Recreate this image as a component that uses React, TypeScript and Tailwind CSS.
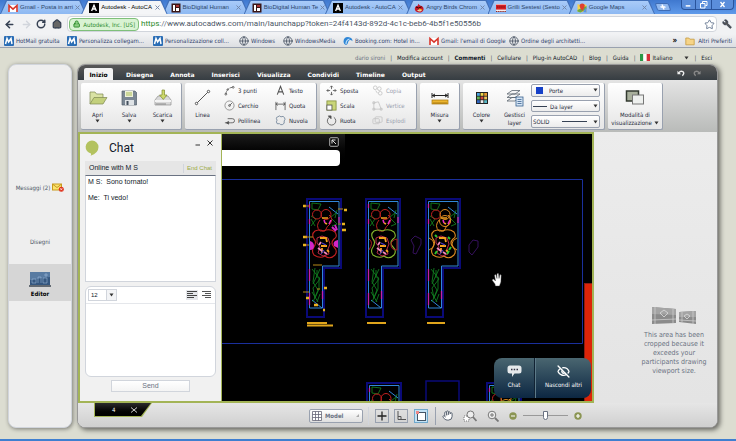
import type { ReactNode } from "react"
import { ArrowLeft, ArrowRight, EyeOff, Globe, Hand, House, Lock, RotateCw, Star, Wrench } from "lucide-react"

type Fav = "gmail" | "autodesk" | "bio" | "birds" | "grilli" | "maps" | "msn" | "globe" | "booking" | "folder"

const tabs: { icon: Fav; label: string; active?: boolean }[] = [
    { icon: "gmail", label: "Gmail - Posta in arri" },
    { icon: "autodesk", label: "Autodesk - AutoCA", active: true },
    { icon: "bio", label: "BioDigital Human" },
    { icon: "bio", label: "BioDigital Human Te" },
    { icon: "autodesk", label: "Autodesk - AutoCA" },
    { icon: "birds", label: "Angry Birds Chrom" },
    { icon: "grilli", label: "Grilli Sestesi (Sesto" },
    { icon: "maps", label: "Google Maps" },
]

const bookmarks: { icon: Fav; label: string; width: string }[] = [
    { icon: "msn", label: "HotMail gratuita", width: "w-[63px]" },
    { icon: "msn", label: "Personalizza collegam...", width: "w-[86px]" },
    { icon: "msn", label: "Personalizzazione coll...", width: "w-[86px]" },
    { icon: "globe", label: "Windows", width: "w-[44px]" },
    { icon: "globe", label: "WindowsMedia", width: "w-[60px]" },
    { icon: "booking", label: "Booking.com: Hotel in...", width: "w-[86px]" },
    { icon: "gmail", label: "Gmail: l'email di Google", width: "w-[80px]" },
    { icon: "globe", label: "Ordine degli architetti...", width: "w-[84px]" },
]

const ribbonTabs = ["Disegna", "Annota", "Inserisci", "Visualizza", "Condividi", "Timeline", "Output"]

function Favicon({ kind }: { kind: Fav }) {
    if (kind === "globe") return <Globe className="size-[10px] shrink-0 text-gray-600" />
    return (
        <svg viewBox="0 0 10 10" className="size-[10px] shrink-0">
            {kind === "gmail" && (
                <>
                    <rect x="0.5" y="2" width="9" height="7" fill="#fff" />
                    <path d="M1 9V2.5L5 6.2 9 2.5V9" fill="none" stroke="#d8352a" strokeWidth="1.6" />
                </>
            )}
            {kind === "autodesk" && (
                <>
                    <rect width="10" height="10" fill="#000" />
                    <path d="M2.6 8L5 2.2 7.4 8M3.5 6h3" fill="none" stroke="#fff" strokeWidth="1.3" />
                </>
            )}
            {kind === "bio" && (
                <>
                    <rect x="0.5" y="0.5" width="9" height="9" fill="#3a1616" />
                    <path d="M2 2h2v6H2zM5 5h3v3H5z" fill="#fff" />
                    <path d="M5 2h3v2H5z" fill="#a33" />
                </>
            )}
            {kind === "birds" && (
                <>
                    <path d="M4 0.8L6 2.4Q9.6 3 9.6 6.2 9 9.6 5 9.6 0.6 9 0.8 5.6 1 3 4 2.4z" fill="#c51a2c" />
                    <path d="M3 7.6q2.5-2 5 0Q6 9.6 3 7.6z" fill="#e8d8b0" />
                    <path d="M5 5.4l3.6 1-3.4 1.2z" fill="#f5b51c" />
                    <path d="M2 4l2.5 1L7.6 3.8" stroke="#300" fill="none" />
                </>
            )}
            {kind === "grilli" && (
                <>
                    <rect y="1" width="10" height="8" fill="#fff" />
                    <rect y="1.6" width="10" height="5" fill="#d51e25" />
                    <path d="M1 4h8M0 8.4h10" stroke="#7c1010" strokeDasharray="1.5 0.6" />
                </>
            )}
            {kind === "maps" && (
                <>
                    <path d="M0.5 1l3 1 3-1 3 1v7.5l-3-1-3 1-3-1z" fill="#f7d24a" />
                    <path d="M0.5 7l9-4v3l-6 3.5-3-1z" fill="#6aaa45" />
                    <path d="M6 9L9.5 4v5.5z" fill="#5b93e6" />
                    <path d="M5.2 8Q2.6 4.6 2.6 3a2.6 2.6 0 015.2 0Q7.8 4.6 5.2 8z" fill="#e0402f" />
                </>
            )}
            {kind === "msn" && (
                <>
                    <rect width="10" height="10" rx="1" fill="#2a6db5" />
                    <path d="M1.5 8L3 2.5 4.6 6 7 2.5 8 8" fill="none" stroke="#fff" strokeWidth="1.5" />
                </>
            )}
            {kind === "booking" && (
                <>
                    <path d="M0.5 6Q0.5 1 5 1q4.5 0.4 4.5 4.2Q7 3 5.6 5 5 8 3 9 0.8 8.4 0.5 6z" fill="#2f86d6" />
                    <path d="M3 8Q3 4 6.5 3" stroke="#bfe0fa" strokeWidth="1.2" fill="none" />
                </>
            )}
            {kind === "folder" && (
                <path d="M0.8 2h3l1 1.2h4.4v5.6H0.8z" fill="#f6d488" stroke="#c79a3e" strokeWidth="0.8" />
            )}
        </svg>
    )
}

function Caret() {
    return (
        <svg viewBox="0 0 5 4" className="h-[4px] w-[5px] shrink-0 pointer-events-none">
            <path d="M0.5 0.5h4L2.5 3.5z" fill="#333" />
        </svg>
    )
}

function BrowserTabs() {
    return (
        <div className="flex h-[14px] items-stretch bg-linear-to-b from-[#3f78cf] to-[#5f9aea]">
            <div className="flex min-w-0 flex-1" role="tablist">
                {tabs.map((tab, i) => (
                    <button
                        key={i}
                        role="tab"
                        aria-selected={!!tab.active}
                        className={
                            "-mr-[5px] min-w-0 flex-1 bg-[#4270b8] px-px pt-px [clip-path:polygon(0_100%,6px_0,calc(100%-6px)_0,100%_100%)] " +
                            (tab.active ? "relative z-10" : "")
                        }
                    >
                        <span
                            className={
                                "flex h-full items-center gap-[2px] px-[7px] [clip-path:polygon(0_100%,6px_0,calc(100%-6px)_0,100%_100%)] " +
                                (tab.active ? "bg-[#f4f5f7] text-black" : "bg-linear-to-b from-[#a9cbf8] to-[#8db8f2] text-[#2c4468]")
                            }
                        >
                            <Favicon kind={tab.icon} />
                            <span className="flex-1 text-left font-['Liberation_Sans',Arial,sans-serif] text-[6px] whitespace-nowrap">{tab.label}</span>
                            <svg viewBox="0 0 5 5" className="size-[5px] shrink-0"><path d="M.5.5l4 4M4.500.5l-4 4" stroke="#6f82a4" strokeWidth="0.900" /></svg>
                        </span>
                    </button>
                ))}
            </div>
            <button aria-label="Nuova scheda" className="ml-[6px] h-[8px] w-[14px] skew-x-[20deg] self-center rounded-xs border border-[#3e6cb5] bg-[#8fb7ee]">
                <svg viewBox="0 0 12 6" className="h-full w-full"><path d="M6 .5v5M3.500 3h5" stroke="#fff" strokeWidth="1.500" /></svg>
            </button>
            <div className="ml-[11px] flex h-[10px] pr-[2px] text-white">
                <button aria-label="Riduci" className="w-[15px] rounded-bl border border-t-0 border-[#2a549c] bg-[#5b8edb]">
                    <svg viewBox="0 0 14 9" className="h-full w-full"><path d="M4 6h5" stroke="#fff" strokeWidth="1.6" /></svg>
                </button>
                <button aria-label="Ripristina" className="w-[15px] border-b border-[#2a549c] bg-[#5b8edb]">
                    <svg viewBox="0 0 14 9" className="h-full w-full"><path d="M6 3V1.500h4.500v4H9M4 3.500h4.500V8H4z" stroke="#fff" fill="none" /></svg>
                </button>
                <button aria-label="Chiudi" className="w-[23px] rounded-br border border-t-0 border-[#2a549c] bg-[#5b8edb]">
                    <svg viewBox="0 0 14 9" className="h-full w-full"><path d="M5 2l4 5M9 2L5 7" stroke="#fff" strokeWidth="1.3" /></svg>
                </button>
            </div>
        </div>
    )
}

function AddressBar() {
    return (
        <div className="flex h-[20px] items-center bg-[#f1f2f4] px-[4px] text-gray-700">
            <button aria-label="Indietro" className="w-[17px]"><ArrowLeft className="size-[11px]" strokeWidth={3.500} /></button>
            <button aria-label="Avanti" className="w-[15px] text-gray-300"><ArrowRight className="size-[11px]" strokeWidth={3} /></button>
            <button aria-label="Ricarica" className="w-[16px]"><RotateCw className="size-[10px]" strokeWidth={3.500} /></button>
            <button aria-label="Pagina iniziale" className="w-[15px]"><House className="size-[10px]" strokeWidth={3} fill="#666" /></button>
            <div className="flex h-[16px] min-w-0 flex-1 items-center rounded-sm border border-gray-300 bg-white px-px">
                <span className="flex h-[13px] w-[70px] items-center gap-[3px] rounded-sm border border-[#7fc07a] bg-[#d9f3d3] px-[3px] text-[6px] whitespace-nowrap text-[#2b8a2b]">
                    <Lock className="size-[8px]" fill="#8fce85" strokeWidth={3} />
                    Autodesk, Inc. [US]
                </span>
                <label className="ml-[2px] flex h-full min-w-0 flex-1 items-center font-[Roboto,'Open_Sans',sans-serif] text-[8px]">
                    <span className="text-[#2b8a2b]">https</span>
                    <span className="text-gray-500">://</span>
                    <input
                        aria-label="Indirizzo"
                        className="min-w-0 flex-1 bg-transparent text-gray-600 outline-none"
                        defaultValue="www.autocadws.com/main/launchapp?token=24f4143d-892d-4c1c-beb6-4b5f1e50556b"
                    />
                </label>
                <Star className="size-[11px] text-slate-500" />
            </div>
            <button aria-label="Strumenti" className="ml-[5px]"><Wrench className="size-[10px] -scale-x-100" fill="#555" /></button>
        </div>
    )
}

function Bookmarks() {
    return (
        <nav className="flex h-[14px] items-center border-b border-gray-400 bg-linear-to-b from-[#f1f2f4] to-[#dddfe2] px-[4px] text-[6px] text-[#30426b]">
            {bookmarks.map((item) => (
                <a key={item.label} href="#" className={"flex shrink-0 items-center gap-[2px] whitespace-nowrap " + item.width}>
                    <Favicon kind={item.icon} />
                    {item.label}
                </a>
            ))}
            <span className="ml-auto text-[8px] font-bold text-black">»</span>
            <a href="#" className="ml-[8px] flex shrink-0 items-center gap-[3px] whitespace-nowrap">
                <Favicon kind="folder" />
                Altri Preferiti
            </a>
        </nav>
    )
}

function AccountLinks() {
    const sep = <span className="text-gray-600">|</span>
    return (
        <nav className="flex h-[16px] items-center justify-end gap-[5px] pt-[3px] pr-[24px] text-[6px] whitespace-nowrap text-gray-900">
            <span className="text-gray-500">dario sironi</span>
            {sep}
            <a href="#">Modifica account</a>
            {sep}
            <a href="#" className="font-bold">Commenti</a>
            {sep}
            <a href="#">Cellulare</a>
            {sep}
            <a href="#">Plug-in AutoCAD</a>
            {sep}
            <a href="#">Blog</a>
            {sep}
            <a href="#">Guida</a>
            {sep}
            <label className="flex items-center gap-[2px]">
                <svg viewBox="0 0 10 7" className="h-[7px] w-[10px]">
                    <path d="M0 0h3.300v7H0z" fill="#2a9a48" />
                    <path d="M3.300 0h3.400v7H3.300z" fill="#fff" />
                    <path d="M6.700 0H10v7H6.700z" fill="#d8303a" />
                </svg>
                <select aria-label="Lingua" className="w-[30px] appearance-none bg-transparent outline-none"><option>Italiano</option></select>
                <Caret />
            </label>
            {sep}
            <a href="#">Esci</a>
        </nav>
    )
}

function Sidebar() {
    return (
        <aside className="mb-[11px] flex w-[64px] flex-col rounded-lg border border-gray-300 bg-[#eeeeee] pt-[118px] text-[6px] text-gray-600 shadow-[1px_1px_4px_rgba(0,0,0,0.45)]">
            <button className="flex items-center justify-center gap-[2px] whitespace-nowrap">
                Messaggi (2)
                <svg viewBox="0 0 12 9" className="h-[9px] w-[12px]">
                    <rect x="0.5" y="1" width="9" height="6" fill="#fbe36c" stroke="#c89a1c" />
                    <path d="M1 1.500l4 3 4-3" fill="none" stroke="#b5860f" strokeWidth="0.8" />
                    <circle cx="9.300" cy="6.200" r="2.500" fill="#e0341e" />
                    <path d="M8.300 5.200l2 2m0-2l-2 2" stroke="#fff" strokeWidth="0.700" />
                </svg>
            </button>
            <button className="mt-[45px]">Disegni</button>
            <button className="mt-[18px] flex h-[37px] flex-col items-center justify-center gap-[2px] bg-[#d6d6d6] pt-[4px] font-bold text-black">
                <svg viewBox="0 0 22 15" className="h-[15px] w-[22px]">
                    <rect x="1" width="20" height="13" fill="#35577f" />
                    <path d="M1 0h20v5L1 8z" fill="#587ba2" />
                    <path d="M3 11V7h4v4zm6 0V5h3v6m2 0V6h4v5zM17 1v4m-2-2h4" fill="none" stroke="#a9c6e6" strokeWidth="0.5" />
                    <path d="M0 14h22" stroke="#3d4650" strokeWidth="1.5" />
                </svg>
                Editor
            </button>
        </aside>
    )
}

function Group({ children, className = "" }: { children: ReactNode; className?: string }) {
    return (
        <div className={"flex h-[47px] shrink-0 rounded-xs border-r border-b border-gray-400 bg-linear-to-b from-white to-[#e6e6e6] " + className}>
            {children}
        </div>
    )
}

function BigButton({ icon, label, menu, className = "" }: { icon: ReactNode; label: string; menu?: boolean; className?: string }) {
    return (
        <button className={"flex shrink-0 flex-col items-center pt-[6px] text-center leading-[8px] " + className}>
            <svg viewBox="0 0 20 18" className="mb-[4px] h-[18px] w-[20px]">{icon}</svg>
            <span className="whitespace-pre">{label}</span>
            {menu && <Caret />}
        </button>
    )
}

function SmallButton({ icon, label, off }: { icon: ReactNode; label: string; off?: boolean }) {
    return (
        <button disabled={off} className={"flex h-[15px] items-center gap-[3px] whitespace-nowrap " + (off ? "text-gray-400" : "")}>
            <svg viewBox="0 0 12 12" className="size-[11px] shrink-0" fill="none" stroke={off ? "#c4c4c4" : "#555"} strokeWidth="0.9">{icon}</svg>
            {label}
        </button>
    )
}

function PropSelect({ label, option, before, after }: { label: string; option: string; before?: ReactNode; after?: ReactNode }) {
    return (
        <label className="flex h-[13px] items-center gap-[3px] rounded-xs border border-gray-400 bg-linear-to-b from-white to-[#ececec] px-px">
            {before}
            <select aria-label={label} className="min-w-0 flex-1 appearance-none bg-transparent outline-none"><option>{option}</option></select>
            {after}
            <Caret />
        </label>
    )
}

function Ribbon() {
    return (
        <div className="flex h-[52px] gap-[3px] overflow-hidden bg-linear-to-b from-[#e4e4e4] to-[#b9bbb9] px-[3px] pt-[3px] text-[6px] text-gray-800">
            <Group className="w-[101px]">
                <BigButton menu label="Apri" className="w-[33px]" icon={
                    <g stroke="#7d8750" strokeWidth="0.7">
                        <path d="M2 15V3h5l1.500 2H15v4" fill="#d9e2a4" />
                        <path d="M2 15L6 8.500h13L15 15z" fill="#c3d07c" />
                    </g>
                } />
                <BigButton menu label="Salva" className="w-[30px]" icon={
                    <g>
                        <path d="M3 2h13l1.500 1.500V16H3z" fill="#7b8794" stroke="#55606c" strokeWidth="0.7" />
                        <rect x="6" y="2" width="8" height="6" fill="#eef2da" />
                        <rect x="6" y="11" width="9" height="5" fill="#dfe3e6" />
                        <rect x="7.500" y="12" width="2" height="4" fill="#45515e" />
                        <path d="M7 4h6M7 6h6" stroke="#a9bb58" />
                    </g>
                } />
                <BigButton menu label="Scarica" className="w-[37px]" icon={
                    <g>
                        <path d="M2 11l3-4h10l3 4v5H2z" fill="#d9d9d9" stroke="#8f8f8f" strokeWidth="0.7" />
                        <path d="M2 11h16v2H2z" fill="#f4f4f4" />
                        <path d="M3 15h10" stroke="#8a8a8a" />
                        <path d="M9 1h2.500v5h2.500l-3.700 4.500L6.500 6H9z" fill="#cdd96b" stroke="#7e8a2c" strokeWidth="0.7" />
                    </g>
                } />
            </Group>
            <Group className="w-[132px]">
                <BigButton label="Linea" className="w-[35px]" icon={
                    <g stroke="#555" fill="#fff">
                        <path d="M4 14L15 3" />
                        <circle cx="3.500" cy="14.500" r="1.200" />
                        <circle cx="15.500" cy="2.500" r="1.200" />
                    </g>
                } />
                <div className="flex w-[52px] flex-col pl-[4px]">
                    <SmallButton label="3 punti" icon={<g><path d="M2 10Q3 3 9.500 2.500" strokeDasharray="3 1" /><circle cx="2" cy="10" r="1" /><circle cx="10" cy="2.500" r="1" /><circle cx="4" cy="5" r="0.800" /></g>} />
                    <SmallButton label="Cerchio" icon={<g><circle cx="6" cy="6" r="5" stroke="#888" /><circle cx="6" cy="6" r="1" /><path d="M6 6l3-3" /></g>} />
                    <SmallButton label="Polilinea" icon={<g><path d="M1 8.500h6M4 4h5q2.500 0 2.500 2.200T9 8.500H7" /><path d="M5 7v3L2.500 8.500z" fill="#444" /></g>} />
                </div>
                <div className="flex flex-col pl-[3px]">
                    <SmallButton label="Testo" icon={<path d="M2.500 10.500L6 1.500l3.500 9M3.800 7.500h4.400" strokeWidth="1.200" />} />
                    <SmallButton label="Quota" icon={<path d="M1 2v9M11 2v9M1 4.500h10M3 3L1 4.500 3 6M9 3l2 1.500L9 6" />} />
                    <SmallButton label="Nuvola" icon={<path d="M3 2q2-2 3.500 0 2.500-1.500 4 1 1 2-0.500 3.500 1 3-2 4-2 0.500-3-1Q1.500 10.500 1.500 7.500 3 5.500 1.500 4 1.500 2 3 2z" stroke="#6c7f95" />} />
                </div>
            </Group>
            <Group className="w-[97px] px-[6px]">
                <div className="flex w-[46px] flex-col">
                    <SmallButton label="Sposta" icon={<path d="M6 1v3.500M6 7.500V11M1 6h3.500M7.500 6H11M4.500 2.500L6 1l1.500 1.500M4.500 9.500L6 11l1.500-1.500M2.500 4.500L1 6l1.500 1.500M9.500 4.500L11 6 9.500 7.500" />} />
                    <SmallButton label="Scala" icon={<g><rect x="1" y="1" width="10" height="10" fill="#c9d679" stroke="#87933f" /><rect x="1" y="5.500" width="5.500" height="5.500" fill="#fff" stroke="#555" /></g>} />
                    <SmallButton label="Ruota" icon={<g><path d="M4 2.300A4.600 4.600 0 108.500 2.500" /><path d="M2.500 1h3v3z" fill="#444" /></g>} />
                </div>
                <div className="flex flex-col">
                    <SmallButton off label="Copia" icon={<g><circle cx="3.500" cy="3" r="2" /><circle cx="8" cy="4" r="2" /><circle cx="9" cy="9" r="2" /><path d="M4 6l2 3" /></g>} />
                    <SmallButton off label="Vertice" icon={<g><path d="M2 10V3l5-1 3 8z" /><path d="M1 2h2v2H1zM1 9h2v2H1zM9 9h2v2H9z" fill="#ddd" /></g>} />
                    <SmallButton off label="Esplodi" icon={<g><rect x="3.500" y="2" width="7.500" height="6" rx="1" /><rect x="1" y="4" width="7" height="5.500" rx="1" /></g>} />
                </div>
            </Group>
            <Group className="w-[40px]">
                <BigButton menu label="Misura" className="w-full" icon={
                    <g>
                        <path d="M2 4v5M18 4v5M2 6.500h16M5 5L2.500 6.500 5 8M15 5l2.500 1.500L15 8" fill="none" stroke="#222" />
                        <rect x="2" y="11" width="16" height="4" fill="#edb62f" stroke="#a6760c" strokeWidth="0.7" />
                        <path d="M4 13v2m2-2v2m2-2v2m2-2v2m2-2v2m2-2v2m2-2v2" stroke="#7c5500" strokeWidth="0.6" />
                    </g>
                } />
            </Group>
            <Group className="w-[142px]">
                <BigButton menu label="Colore" className="w-[37px]" icon={
                    <g>
                        <rect x="4" y="3" width="12" height="12" fill="#222" />
                        {["#4aa3e0", "#f0d84a", "#e89a30", "#62b354", "#d34a3a", "#eec95c", "#2f65c0", "#eee", "#58b9c6"].map((c, i) => (
                            <rect key={c} x={5 + (i % 3) * 3.600} y={4 + Math.floor(i / 3) * 3.600} width="2.800" height="2.800" fill={c} />
                        ))}
                    </g>
                } />
                <BigButton label={"Gestisci\nlayer"} className="w-[29px]" icon={
                    <g fill="#f5f5f5" stroke="#5c6670" strokeWidth="0.8">
                        <path d="M2 12l5-3.500h8L10 12zM2 8.500L7 5h8l-5 3.500zM2 5l5-3.500h8L10 5z" />
                        <rect x="11" y="8" width="7" height="9" fill="#d5e4f4" stroke="#38618f" />
                        <path d="M12.500 10.500h4m-4 2h4m-4 2h4" stroke="#38618f" />
                    </g>
                } />
                <div className="flex min-w-0 flex-1 flex-col gap-[3px] py-px pr-[4px] pl-[2px]">
                    <PropSelect label="Colore layer" option="Porte" before={<span className="mr-[3px] ml-[3px] size-[7px] bg-[#1540c8]" />} />
                    <PropSelect label="Spessore" option="Da layer" before={<span className="h-px w-[14px] bg-gray-700" />} />
                    <PropSelect label="Tipo di linea" option="SOLID" after={<span className="mr-[3px] h-px w-[25px] bg-gray-700" />} />
                </div>
            </Group>
            <Group className="w-[55px]">
                <button className="flex w-full flex-col items-center pt-[6px] text-center leading-[8px]">
                    <svg viewBox="0 0 20 18" className="mb-[4px] h-[18px] w-[20px]">
                        <rect x="1.500" y="2" width="12" height="10" fill="#a9b09c" stroke="#333a30" strokeWidth="1.500" />
                        <rect x="7.500" y="6" width="11" height="9" fill="#eef0ee" stroke="#777" />
                    </svg>
                    <span>Modalità di</span>
                    <span className="flex items-center gap-[2px]">visualizzazione <Caret /></span>
                </button>
            </Group>
        </div>
    )
}

// One floor plan: a wide room on top and a corridor leg below, with furniture.
function Plan({ x, y = 0, variant }: { x: number; y?: number; variant: 1 | 2 | 3 }) {
    const body = variant === 1 ? "#c22020" : variant === 2 ? "#86b82c" : "#dc8a20"
    return (
        <g transform={`translate(${x} ${y})`} fill="none">
            <path d="M0 0H34V69H17V118H0z" stroke="#0a0a78" strokeWidth="2" />
            <path d="M2.500 2.500H32V67H15.500V109H2.500z" stroke="#3186d8" />
            <path d="M2.500 5v4m0 11v5m0 45v12m0 12v12M15.500 92v8M32 18v6" stroke="#c423a8" strokeWidth="1.300" />
            <path d="M5 4l9 1-3 6-6-1zM4 17l5 3-5 7M8 27l-4-7M24 18l5-4M25 20l5 5-5 2M30 11l-2 8" stroke="#127a1c" strokeWidth="0.900" />
            <path d="M22 8l9 7M5 101l10 8" stroke="#3186d8" />
            <path d="M5 70l8 10-7 9 2 10M8 69l-2 14 5 8-5 12M13 70l-7 15M12 78v12l-4 9M10 71v8M5 93l6 10M13 95l-3 8" stroke="#117a20" strokeWidth="0.900" />
            <circle cx="10" cy="15.500" r="4.500" stroke="#c22020" />
            <circle cx="19" cy="15.500" r="5" stroke={variant === 3 ? body : "#c22020"} />
            <path d="M13 21q-5 6 0 11h5q2-5 5-7 4-5-1-9" stroke={variant === 3 ? body : "#b92020"} />
            <path d="M15 19h6m-3 5l2 1" stroke="#f1a11e" strokeWidth="1.600" />
            <path d="M17 21l1 3m6-3-2 4" stroke="#e22cc0" strokeWidth="1.600" />
            <path d="M8 32q5-2 8 0 7-3 12 1 3 5-1 7-4 4 0 8 4 4 1 8-5 5-10 1-5 3-11-1-3-4 0-8 3-5 0-8-3-5 1-8z" stroke={body} strokeWidth="1.100" />
            <path d="M10 39l5-2 6 2 2 6-2 5 1 5-6 2-5-3 2-6-3-4z" stroke="#b52a46" />
            <path d="M13 39h6l1 4m-6 4h6m-5 2v5m5-3 2 2" stroke="#f3a01c" strokeWidth="1.800" />
            <path d="M11 49l4 3m2 1 3 2m-6-12-2 3" stroke="#ee8ac0" strokeWidth="1.800" />
            <path d="M15 44l4 2m-2 5-3 4" stroke="#4938c2" strokeWidth="1.200" />
            {variant === 1 && (
                <>
                    <path d="M3 42q4 1 4 5t-4 4zM31 41q-6 1-4 6l4 2z" fill="#d426c8" />
                    <path d="M25 28l4 4m-1-6 2 5" stroke="#d426c8" strokeWidth="2" />
                    <path d="M-4 7h3m-3 31h4m-4 8h3m38-35h3m-5 14h3m-3 6h4M17 89h3m-21 10h3m14 12h2M7 106h4" stroke="#eab220" strokeWidth="2.600" />
                    <path d="M-2 7h4m-4 31h8m-7 8h3m29-36h5m-5 15h3m-21 65h-3M-4 93h6M6 66h9" stroke="#b88a18" />
                </>
            )}
            {variant === 2 && (
                <path d="M31 40q-6 1-6 6t6 5zM3 40q5 3 0 11" stroke="#a81c22" />
            )}
            {variant === 3 && (
                <>
                    <circle cx="19" cy="22" r="5.500" stroke={body} />
                    <path d="M3 39q5 2 5 6t-5 6M31 39q-5 2-5 6t5 6" stroke={body} />
                    <path d="M9 36l2 2m11 0 2 2m-1 12-2 3m-12 0 2-3m14-4-2 3" stroke="#2fc42c" strokeWidth="2" />
                </>
            )}
        </g>
    )
}

function Drawing() {
    return (
        <svg viewBox="80 134 512 267" className="absolute top-0 right-0 h-[267px] w-[512px]" role="img" aria-label="Disegno">
            <path d="M80 179.500H582.500V343.500H80" fill="none" stroke="#1a2f9c" />
            <Plan x={307} y={199} variant={1} />
            <Plan x={366} y={199} variant={2} />
            <Plan x={426} y={199} variant={3} />
            <path d="M307 323h20M307 325.500h26M367 323h19M427 323h18" stroke="#e0a51c" strokeWidth="2" />
            <path d="M411 240l4-4 6 3v5l-5 10-3-1 1-7zM469 245l4-5 5 1v6l-6 8-3-3z" fill="none" stroke="#35105c" />
            <Plan x={367} y={383} variant={2} />
            <rect x="426" y="381" width="33" height="40" fill="none" stroke="#0a0a78" strokeWidth="1.500" />
            <Plan x={487} y={383} variant={3} />
            <rect x="584.500" y="283.500" width="8" height="120" fill="#dd2408" stroke="#8c1c12" />
            <path d="M495 284l-3-4 1.500-1 2 2-1-6 1.500-.5 1 4 0-5h1.500l.5 5 1-4 1.200.5-.3 7-1.500 4h-4z" fill="#fff" stroke="#444" strokeWidth="0.400" />
        </svg>
    )
}

function ChatWindow() {
    return (
        <section className="absolute inset-y-0 left-0 flex w-[142px] flex-col border-r border-[#a3b456] bg-[#f1f1f1] px-[5px] font-['Liberation_Sans',Arial,sans-serif] text-[7px] text-gray-900">
            <header className="flex h-[27px] items-start gap-[10px] pt-[6px]">
                <svg viewBox="0 0 14 16" className="h-[16px] w-[14px]">
                    <path d="M7 0.500a6.500 6.500 0 016.500 6.500Q13.500 13 5.500 15.800 6.500 14.500 6 13.400A6.500 6.500 0 017 .5z" fill="#b3c25f" />
                </svg>
                <h2 className="flex-1 font-[Roboto,'Open_Sans',sans-serif] text-[12px] leading-[16px]">Chat</h2>
                <button aria-label="Riduci chat" className="-mr-[4px]"><svg viewBox="0 0 6 6" className="size-[6px]"><path d="M0.500 5h4.500" stroke="#333" /></svg></button>
                <button aria-label="Chiudi chat" className="mr-[3px]"><svg viewBox="0 0 6 6" className="size-[6px]"><path d="M.5.5l5 5M5.500.5l-5 5" stroke="#333" /></svg></button>
            </header>
            <div className="flex h-[14px] items-center justify-between bg-[#e6e6e6] px-[4px]">
                <span>Online with M S</span>
                <button className="border-l border-gray-300 pl-[3px] text-[6px] text-[#9aab45]">End Chat</button>
            </div>
            <div className="min-h-0 flex-1 border border-t-gray-500 border-r-gray-300 border-b-gray-300 border-l-gray-300 bg-white px-[2px] pt-[2px] leading-[8px]">
                <p className="whitespace-pre">M S:  Sono tornato!</p>
                <p className="mt-[8px] whitespace-pre">Me:  Ti vedo!</p>
            </div>
            <div className="mt-[4px] flex h-[91px] flex-col rounded-md border border-gray-300 bg-white">
                <div className="flex h-[17px] items-center border-b border-gray-200 px-[2px]">
                    <label className="flex h-[12px] w-[29px] items-center border border-gray-300 pl-[2px] text-[6px]">
                        <select aria-label="Dimensione testo" className="min-w-0 flex-1 appearance-none bg-transparent outline-none"><option>12</option></select>
                        <span className="flex h-full w-[10px] items-center justify-center border-l border-gray-300 bg-gray-100"><Caret /></span>
                    </label>
                    <button aria-label="Allinea a sinistra" className="mr-[3px] ml-auto bg-gray-200 p-px">
                        <svg viewBox="0 0 10 8" className="h-[8px] w-[10px]"><path d="M0 .5h10M0 2.500h6M0 4.500h10M0 6.500h7" stroke="#444" /></svg>
                    </button>
                    <button aria-label="Allinea a destra" className="mr-[2px]">
                        <svg viewBox="0 0 10 8" className="h-[8px] w-[10px]"><path d="M1 .5h9M4 2.500h6M1 4.500h9M4 6.500h6" stroke="#555" /></svg>
                    </button>
                </div>
                <textarea aria-label="Messaggio" className="min-h-0 w-full flex-1 resize-none p-[2px] outline-none" />
            </div>
            <button className="mx-auto mt-[3px] mb-[9px] h-[12px] w-[79px] border border-gray-300 bg-linear-to-b from-white to-[#f4f4f4] text-gray-500">Send</button>
        </section>
    )
}

function Canvas() {
    return (
        <div className="relative min-h-[271px] flex-1 overflow-hidden border-2 border-[#a3b456] bg-black">
            <Drawing />
            <div className="absolute top-0 left-[142px] h-[33px] w-[123px] rounded-br-lg bg-linear-to-b from-[#1c1c1c] to-black">
                <button aria-label="Riduci barra" className="absolute top-[3px] right-[6px]">
                    <svg viewBox="0 0 10 10" className="size-[10px]"><rect x="0.700" y="0.700" width="8.600" height="8.600" rx="1" fill="none" stroke="#aaa" /><path d="M3 6.500V3h3.500M3 3l4 4" stroke="#ddd" fill="none" /></svg>
                </button>
                <input aria-label="Cerca" className="absolute right-[5px] bottom-px h-[16px] w-[118px] rounded-r bg-white" />
            </div>
            <ChatWindow />
            <div className="absolute right-px bottom-[3px] flex h-[40px] w-[97px] overflow-hidden rounded-lg bg-linear-to-b from-[#4a6670] to-[#0c2742] text-[6px] text-white">
                <button className="flex w-[41px] flex-col items-center gap-[2px] border-r border-[#123] pt-[7px]">
                    <svg viewBox="0 0 15 13" className="h-[13px] w-[15px]">
                        <path d="M3 .5h9q2.500 0 2.500 2.500v3q0 2.500-2.500 2.500H7.500L5 12V8.500H3Q.5 8.500.5 6V3Q.5.5 3 .5z" fill="#e6eaec" />
                        <path d="M4 4.500h1.500m1.200 0h1.500m1.300 0H11" stroke="#334" strokeWidth="1.500" />
                    </svg>
                    Chat
                </button>
                <button className="flex flex-1 flex-col items-center gap-[2px] border-l border-[#5d7a88] pt-[7px] whitespace-nowrap">
                    <EyeOff className="h-[13px] w-[15px]" strokeWidth={2.500} />
                    Nascondi altri
                </button>
            </div>
        </div>
    )
}

function CroppedArea() {
    return (
        <aside className="flex w-[123px] shrink-0 flex-col items-center bg-linear-to-b from-[#ececec] to-[#e4e4e4] pt-[174px] pr-[6px] pl-[43px] text-center text-[7px] leading-[9px] text-gray-500">
            <svg viewBox="0 0 46 20" className="mb-[5px] h-[20px] w-[46px]">
                <path d="M1 1l24 2v14L1 18zM28 6l17-1v13l-17-2z" fill="#8b8b8b" />
                <path d="M1 1l24 2v6L1 8zM28 6l17-1v6H28z" fill="#a4a4a4" />
                <path d="M4 1v17M22 3v14M1 14l24-1M31 6v10M42 5v13M28 14l17 1" stroke="#d4d4d4" strokeWidth="0.700" />
                <path d="M13 4l4 3-4 4-4-4zM36 8l3 2-3 3-3-3z" fill="none" stroke="#ddd" strokeWidth="0.800" />
            </svg>
            <p className="w-[74px]">This area has been cropped because it exceeds your participants drawing viewport size.</p>
        </aside>
    )
}

function StatusBar() {
    return (
        <footer className="flex h-[24px] items-start bg-linear-to-b from-[#e6e6e6] to-[#cfcfcf] pl-[16px]">
            <div className="h-[14px] w-[58px] bg-[#a3b456] [clip-path:polygon(0_0,100%_0,calc(100%-10px)_100%,0_100%)]">
                <div className="mx-px flex h-[13px] items-center bg-linear-to-b from-[#2c2c2c] to-black pl-[17px] text-[6px] text-white [clip-path:polygon(0_0,100%_0,calc(100%-10px)_100%,0_100%)]">
                    4
                    <button aria-label="Chiudi disegno" className="ml-[15px]">
                        <svg viewBox="0 0 8 8" className="size-[8px]"><path d="M1 1.500l6 5M7 1.500l-6 5" stroke="#ccc" /></svg>
                    </button>
                </div>
            </div>
            <div className="ml-[157px] flex h-[22px] items-center pt-[3px] text-gray-700">
                <button className="flex h-[14px] w-[54px] items-center gap-[3px] rounded-xs border border-gray-400 bg-linear-to-b from-white to-[#e0e0e0] px-[2px] text-[6px] font-bold text-gray-500">
                    <svg viewBox="0 0 10 10" className="size-[10px]"><path d="M.5.5h9v9h-9zM3.500.5v9M6.500.5v9M.5 3.500h9M.5 6.500h9" fill="#fff" stroke="#667" strokeWidth="0.800" /></svg>
                    <span className="flex-1 text-left">Model</span>
                    <svg viewBox="0 0 5 5" className="size-[5px]"><path d="M1 4l3-3v3z" fill="#aaa" /></svg>
                </button>
                <span className="mx-[5px] h-[18px] w-px bg-gray-300" />
                <button aria-label="Griglia" className="ml-px size-[14px] border border-gray-400"><svg viewBox="0 0 12 12"><path d="M6 1.500v9M1.500 6h9" stroke="#222" strokeWidth="1.300" /></svg></button>
                <button aria-label="Orto" className="ml-[5px] size-[14px] border border-gray-400"><svg viewBox="0 0 12 12"><path d="M3 1v8.500h8M3 6.500h3v3" fill="none" stroke="#555" /></svg></button>
                <button aria-label="Osnap" className="ml-[6px] size-[14px] border border-[#6fa8cc] bg-[#c4e2f4]"><svg viewBox="0 0 12 12"><rect x="2.500" y="2.500" width="8" height="8" fill="#fff" stroke="#456" /><path d="M1 1h3v3H1z" fill="#e88" /></svg></button>
                <span className="ml-[7px] h-[18px] w-px bg-gray-400" />
                <button aria-label="Panoramica" className="ml-[6px]"><Hand className="size-[11px] text-gray-600" fill="#fff" /></button>
                <button aria-label="Zoom finestra" className="ml-[10px]">
                    <svg viewBox="0 0 14 12" className="h-[12px] w-[14px]" fill="none" stroke="#777"><path d="M1 6h5v5H1z" fill="#fff" strokeDasharray="1 1" /><circle cx="7.500" cy="4.500" r="3.500" fill="#eee" /><path d="M10 7l3.500 4" strokeWidth="1.800" /></svg>
                </button>
                <button aria-label="Zoom estensioni" className="ml-[10px]">
                    <svg viewBox="0 0 12 12" className="size-[12px]" fill="none" stroke="#777"><circle cx="5" cy="5" r="3.800" fill="#eee" /><path d="M8 8l3.500 3.500" strokeWidth="1.800" /><path d="M5 3v4M3 5h4" /></svg>
                </button>
                <button aria-label="Zoom indietro" className="ml-[10px]"><svg viewBox="0 0 8 8" className="size-[8px]"><circle cx="4" cy="4" r="3.700" fill="#8b9553" /><path d="M2 4h4" stroke="#fff" strokeWidth="1.200" /></svg></button>
                <input
                    type="range"
                    aria-label="Zoom"
                    defaultValue={50}
                    className="mx-[6px] h-[10px] w-[45px] appearance-none bg-[linear-gradient(#999,#999)] bg-size-[100%_1px] bg-center bg-no-repeat [&::-webkit-slider-thumb]:h-[9px] [&::-webkit-slider-thumb]:w-[5px] [&::-webkit-slider-thumb]:appearance-none [&::-webkit-slider-thumb]:rounded-b [&::-webkit-slider-thumb]:border [&::-webkit-slider-thumb]:border-gray-500 [&::-webkit-slider-thumb]:bg-white"
                />
                <button aria-label="Zoom avanti"><svg viewBox="0 0 8 8" className="size-[8px]"><circle cx="4" cy="4" r="3.700" fill="#8b9553" /><path d="M2 4h4M4 2v4" stroke="#fff" strokeWidth="1.200" /></svg></button>
            </div>
        </footer>
    )
}

function Editor() {
    return (
        <main className="mb-[11px] flex min-w-0 flex-1 flex-col overflow-hidden rounded-lg border border-[#999] bg-[#e8e8e8] shadow-[2px_2px_5px_rgba(0,0,0,0.55)]">
            <div className="flex h-[15px] items-end gap-[17px] bg-linear-to-b from-[#585858] to-[#363d42] pl-[6px] font-['DejaVu_Sans',sans-serif] text-[6px] font-bold text-white">
                <button className="-mr-[4px] h-[12px] w-[29px] rounded-t-xs bg-[#f2f2f2] text-black">Inizio</button>
                {ribbonTabs.map((label) => (
                    <button key={label} className="h-[12px]">{label}</button>
                ))}
                <div className="mr-[16px] ml-auto flex h-full items-center gap-[8px]">
                    <button aria-label="Annulla"><svg viewBox="0 0 9 9" className="size-[8px]"><path d="M2 4.500Q4 1.500 6.500 3T6 7.500" stroke="#eee" strokeWidth="1.500" fill="none" /><path d="M.5 2v4h4z" fill="#eee" /></svg></button>
                    <button aria-label="Ripeti"><svg viewBox="0 0 9 9" className="size-[8px]"><path d="M7 4.500Q5 1.500 2.500 3T3 7.500" stroke="#888" strokeWidth="1.500" fill="none" /><path d="M8.500 2v4h-4z" fill="#888" /></svg></button>
                </div>
            </div>
            <Ribbon />
            <div className="flex flex-1">
                <Canvas />
                <CroppedArea />
            </div>
            <StatusBar />
        </main>
    )
}

function App() {
    return (
        <div className="flex min-h-screen flex-col border-b-2 border-[#3f7fd0] bg-[#dcddd1] font-['DejaVu_Sans_Condensed','Noto_Sans',sans-serif]">
            <BrowserTabs />
            <AddressBar />
            <Bookmarks />
            <AccountLinks />
            <div className="flex flex-1 gap-[5px] pr-[18px] pl-[8px]">
                <Sidebar />
                <Editor />
            </div>
        </div>
    )
}

export default App
